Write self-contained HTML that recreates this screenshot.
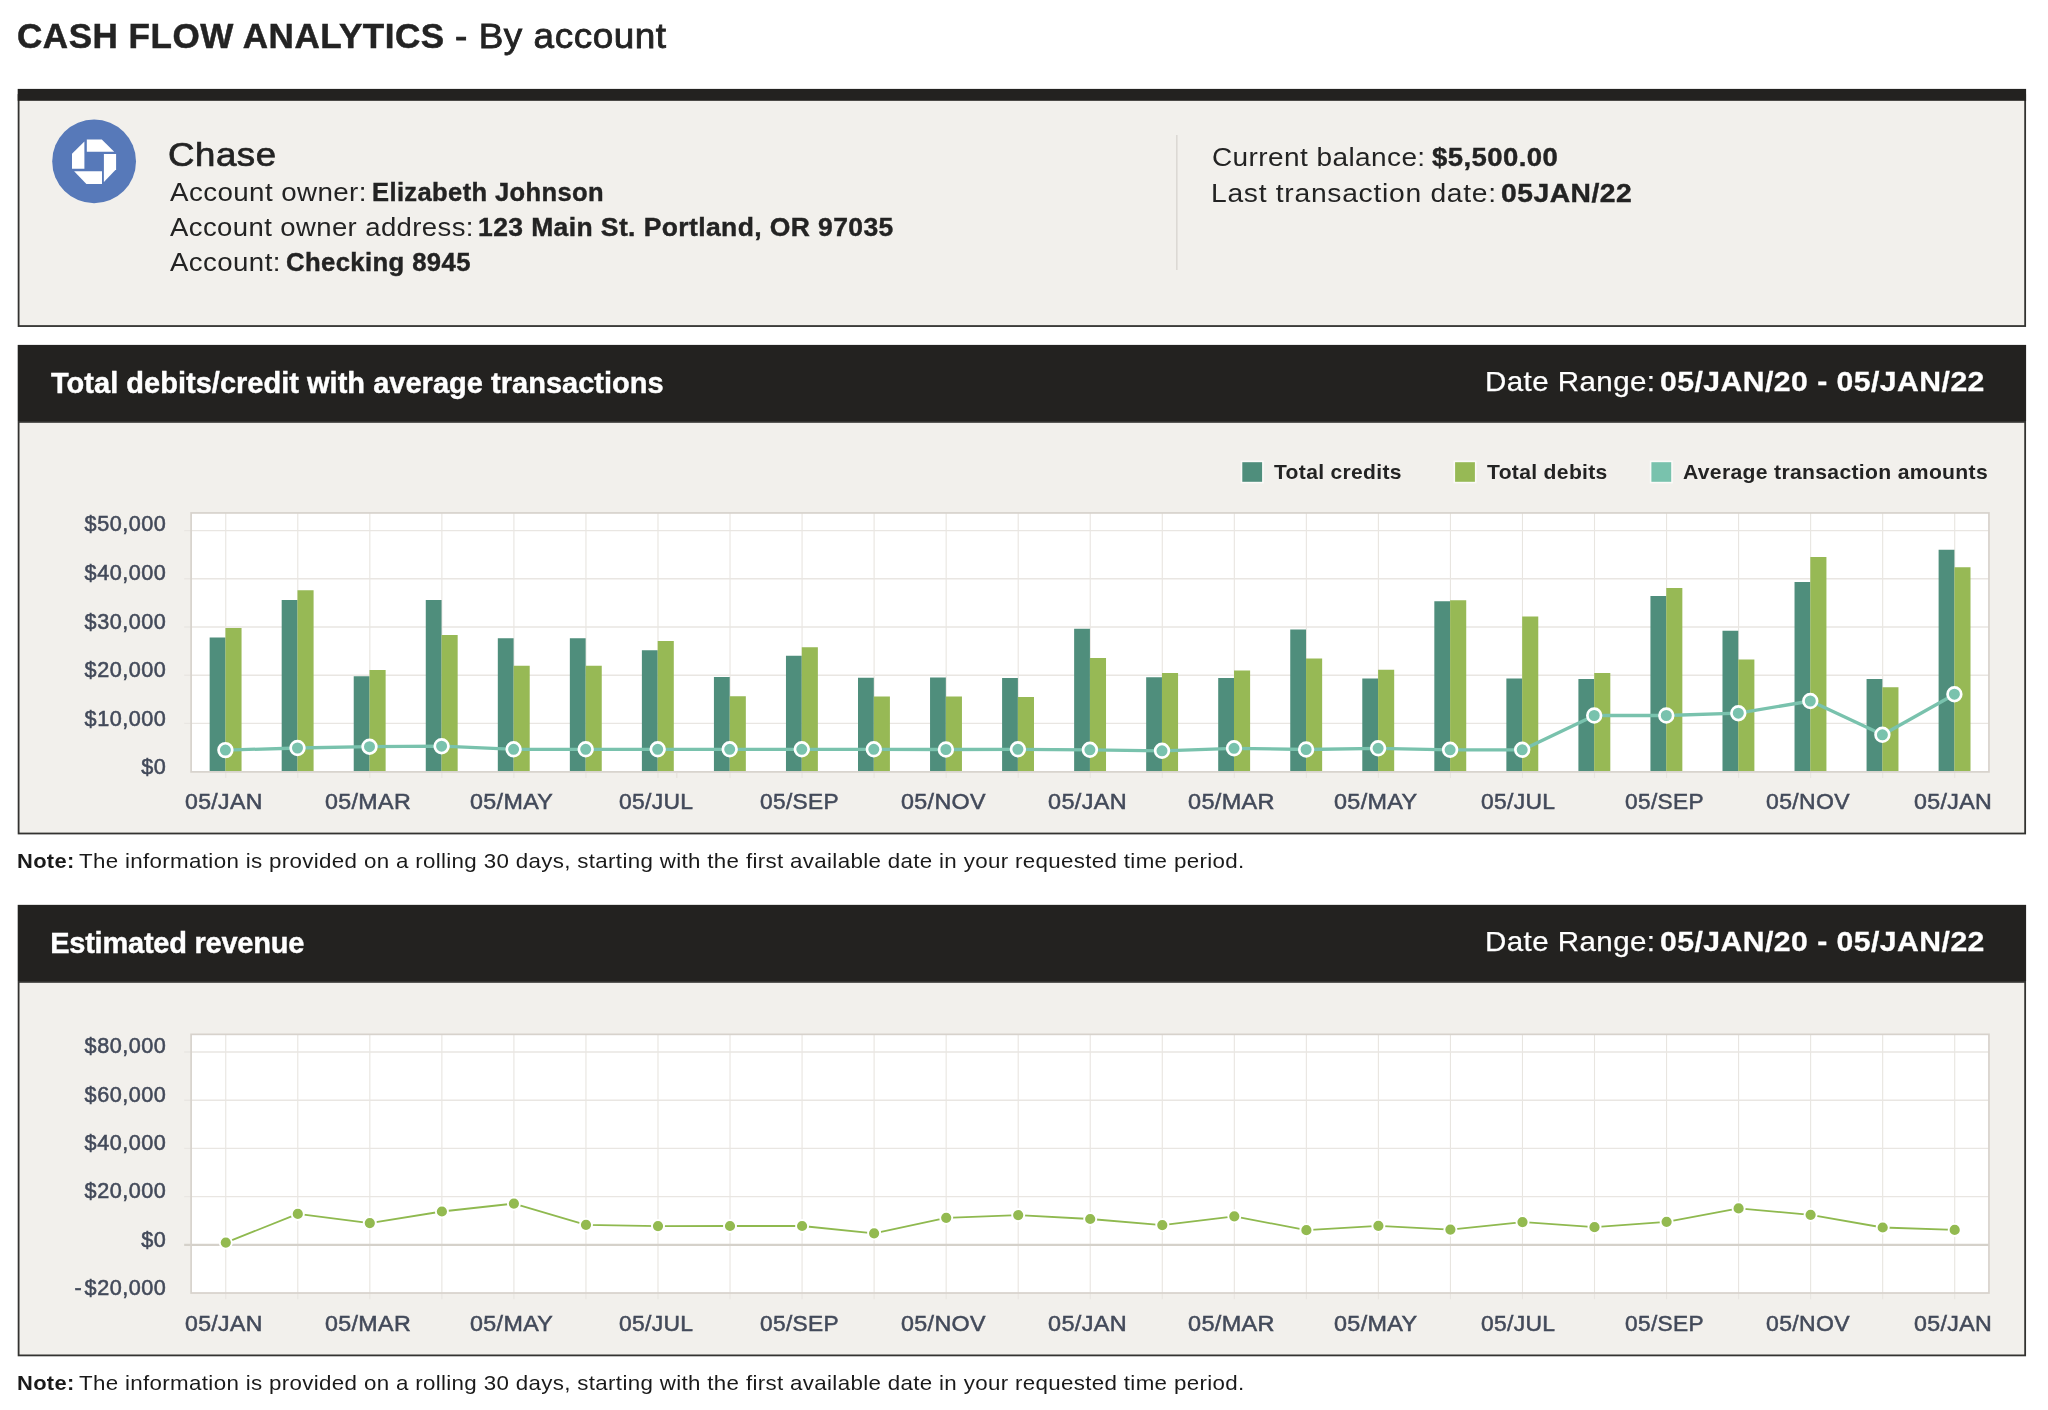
<!DOCTYPE html>
<html lang="en"><head><meta charset="utf-8"><title>Cash Flow Analytics - By account</title>
<style>
html,body{margin:0;padding:0;background:#fff;}
body{width:2048px;height:1410px;position:relative;overflow:hidden;font-family:"Liberation Sans", sans-serif;color:#232323;}
.t{position:absolute;z-index:2;white-space:pre;line-height:1;font-family:"Liberation Sans", sans-serif;}
svg{position:absolute;left:0;top:0;overflow:visible;}
svg text{font-family:"Liberation Sans", sans-serif;}
#wrap{position:absolute;left:0;top:0;width:2048px;height:1410px;will-change:transform;}
</style></head><body><div id="wrap">

<h1 style="margin:0;font-size:0">
<span class="t" id="title_b" style="font-size:34.5px;font-weight:700;color:#232323;top:18.60px;left:16.71px;letter-spacing:0.517px;transform:scaleX(1.0154);transform-origin:0 50%;-webkit-text-stroke:0.5px #232323;">CASH FLOW ANALYTICS</span>
<span class="t" id="title_r" style="font-size:34.5px;font-weight:400;color:#232323;top:18.60px;left:455.15px;letter-spacing:0.517px;transform:scaleX(1.0693);transform-origin:0 50%;-webkit-text-stroke:0.8px #232323;">- By account</span>
</h1>
<section>
<svg width="2048" height="340" viewBox="0 0 2048 340">
<rect x="18.6" y="95" width="2006.55" height="231.05" fill="#f2f0ec" stroke="#333331" stroke-width="1.8"/>
<rect x="17.7" y="88.9" width="2008.4" height="11.9" fill="#232220"/>
<circle cx="94.1" cy="161.4" r="41.9" fill="#5779b9"/>
<g transform="translate(72,139.5)" fill="#fff">
<polygon points="14.8,0 29.8,0 42.2,12.2 14.8,12.2"/>
<polygon points="0,14.2 12.4,2 12.4,29.3 0,29.3"/>
<polygon points="31.9,14.6 44.1,14.6 44.1,29.8 31.9,42.5"/>
<polygon points="2.1,31.7 30,31.7 30,44.4 14.4,44.4"/>
</g>
<rect x="1176" y="135" width="1.6" height="135" fill="#dcd9d4"/>
</svg>
<span class="t" id="chase" style="font-size:33.5px;font-weight:400;color:#232323;top:137.94px;left:167.78px;letter-spacing:0.503px;transform:scaleX(1.0936);transform-origin:0 50%;-webkit-text-stroke:0.7px #232323;">Chase</span>
<span class="t" id="l1a" style="font-size:25px;font-weight:400;color:#232323;top:180.44px;left:170.00px;letter-spacing:0.375px;transform:scaleX(1.1084);transform-origin:0 50%;">Account owner:</span>
<span class="t" id="l1b" style="font-size:25px;font-weight:700;color:#232323;top:180.44px;left:371.60px;letter-spacing:0.375px;transform:scaleX(1.0211);transform-origin:0 50%;-webkit-text-stroke:0.4px #232323;">Elizabeth Johnson</span>
<span class="t" id="l2a" style="font-size:25px;font-weight:400;color:#232323;top:215.24px;left:170.00px;letter-spacing:0.375px;transform:scaleX(1.0993);transform-origin:0 50%;">Account owner address:</span>
<span class="t" id="l2b" style="font-size:25px;font-weight:700;color:#232323;top:215.24px;left:478.34px;letter-spacing:0.375px;transform:scaleX(1.0596);transform-origin:0 50%;-webkit-text-stroke:0.4px #232323;">123 Main St. Portland, OR 97035</span>
<span class="t" id="l3a" style="font-size:25px;font-weight:400;color:#232323;top:250.24px;left:170.00px;letter-spacing:0.375px;transform:scaleX(1.1050);transform-origin:0 50%;">Account:</span>
<span class="t" id="l3b" style="font-size:25px;font-weight:700;color:#232323;top:250.24px;left:285.90px;letter-spacing:0.375px;transform:scaleX(1.0270);transform-origin:0 50%;-webkit-text-stroke:0.4px #232323;">Checking 8945</span>
<span class="t" id="r1a" style="font-size:25px;font-weight:400;color:#232323;top:145.44px;left:1211.69px;letter-spacing:0.375px;transform:scaleX(1.1191);transform-origin:0 50%;">Current balance:</span>
<span class="t" id="r1b" style="font-size:25px;font-weight:700;color:#232323;top:145.44px;left:1432.00px;letter-spacing:0.375px;transform:scaleX(1.1007);transform-origin:0 50%;-webkit-text-stroke:0.4px #232323;">$5,500.00</span>
<span class="t" id="r2a" style="font-size:25px;font-weight:400;color:#232323;top:180.64px;left:1211.19px;letter-spacing:0.630px;transform:scaleX(1.1300);transform-origin:0 50%;">Last transaction date:</span>
<span class="t" id="r2b" style="font-size:25px;font-weight:700;color:#232323;top:180.64px;left:1501.42px;letter-spacing:0.440px;transform:scaleX(1.1300);transform-origin:0 50%;-webkit-text-stroke:0.4px #232323;">05JAN/22</span>
</section>
<section>
<span class="t" id="c1_h" style="font-size:29px;font-weight:700;color:#fff;top:368.65px;left:51.00px;letter-spacing:0.019px;-webkit-text-stroke:0.4px #fff;">Total debits/credit with average transactions</span>
<span class="t" id="c1_dr" style="font-size:28px;font-weight:400;color:#fff;top:368.10px;left:1484.70px;letter-spacing:0.420px;transform:scaleX(1.0536);transform-origin:0 50%;-webkit-text-stroke:0.25px #fff;">Date Range:</span>
<span class="t" id="c1_dv" style="font-size:28px;font-weight:700;color:#fff;top:368.10px;left:1659.66px;letter-spacing:0.420px;transform:scaleX(1.0777);transform-origin:0 50%;-webkit-text-stroke:0.3px #fff;">05/JAN/20 - 05/JAN/22</span>
<svg width="2048" height="1410" viewBox="0 0 2048 1410">
<rect x="18.6" y="421.90" width="2006.55" height="411.60" fill="#f2f0ec" stroke="#333331" stroke-width="1.8"/>
<rect x="17.7" y="344.9" width="2008.4" height="76.10" fill="#232220"/>
<rect x="191.1" y="512.95" width="1797.8500000000001" height="258.94999999999993" fill="#fff"/>
<path d="M225.75 512.95V778.1M297.79 512.95V778.1M369.83 512.95V778.1M441.87 512.95V778.1M513.91 512.95V778.1M585.95 512.95V778.1M657.99 512.95V778.1M730.03 512.95V778.1M802.07 512.95V778.1M874.11 512.95V778.1M946.15 512.95V778.1M1018.19 512.95V778.1M1090.23 512.95V778.1M1162.27 512.95V778.1M1234.31 512.95V778.1M1306.35 512.95V778.1M1378.39 512.95V778.1M1450.43 512.95V778.1M1522.47 512.95V778.1M1594.51 512.95V778.1M1666.55 512.95V778.1M1738.59 512.95V778.1M1810.63 512.95V778.1M1882.67 512.95V778.1M1954.71 512.95V778.1" stroke="#e8e5e0" stroke-width="1.1" fill="none"/>
<path d="M184.2 530.60H1988.95M184.2 578.80H1988.95M184.2 627.00H1988.95M184.2 675.20H1988.95M184.2 723.40H1988.95" stroke="#e9e6e2" stroke-width="1.4" fill="none"/>
<rect x="191.1" y="512.95" width="1797.8500000000001" height="258.94999999999993" fill="none" stroke="#d7d2cc" stroke-width="1.7"/>
<path d="M676.8 772.6999999999999V778.1" stroke="#e4e0db" stroke-width="1.1" fill="none"/>
<path d="M209.65 771.1V637.6H225.45V771.1ZM281.69 771.1V600.0H297.49V771.1ZM353.73 771.1V676.2H369.53V771.1ZM425.77 771.1V600.0H441.57V771.1ZM497.81 771.1V638.3H513.61V771.1ZM569.85 771.1V638.3H585.65V771.1ZM641.89 771.1V650.3H657.69V771.1ZM713.93 771.1V676.9H729.73V771.1ZM785.97 771.1V655.8H801.77V771.1ZM858.01 771.1V677.7H873.81V771.1ZM930.05 771.1V677.4H945.85V771.1ZM1002.09 771.1V677.9H1017.89V771.1ZM1074.13 771.1V628.7H1089.93V771.1ZM1146.17 771.1V677.2H1161.97V771.1ZM1218.21 771.1V677.9H1234.01V771.1ZM1290.25 771.1V629.4H1306.05V771.1ZM1362.29 771.1V678.4H1378.09V771.1ZM1434.33 771.1V601.2H1450.13V771.1ZM1506.37 771.1V678.4H1522.17V771.1ZM1578.41 771.1V679.0H1594.21V771.1ZM1650.45 771.1V595.9H1666.25V771.1ZM1722.49 771.1V630.7H1738.29V771.1ZM1794.53 771.1V581.9H1810.33V771.1ZM1866.57 771.1V678.9H1882.37V771.1ZM1938.61 771.1V549.7H1954.41V771.1Z" fill="#4f8e7c"/>
<path d="M225.45 771.1V627.9H241.55V771.1ZM297.49 771.1V590.3H313.59V771.1ZM369.53 771.1V670.1H385.63V771.1ZM441.57 771.1V635.0H457.67V771.1ZM513.61 771.1V665.7H529.71V771.1ZM585.65 771.1V665.7H601.75V771.1ZM657.69 771.1V641.1H673.79V771.1ZM729.73 771.1V696.2H745.83V771.1ZM801.77 771.1V647.2H817.87V771.1ZM873.81 771.1V696.5H889.91V771.1ZM945.85 771.1V696.5H961.95V771.1ZM1017.89 771.1V697.0H1033.99V771.1ZM1089.93 771.1V657.9H1106.03V771.1ZM1161.97 771.1V672.9H1178.07V771.1ZM1234.01 771.1V670.6H1250.11V771.1ZM1306.05 771.1V658.4H1322.15V771.1ZM1378.09 771.1V669.8H1394.19V771.1ZM1450.13 771.1V600.2H1466.23V771.1ZM1522.17 771.1V616.5H1538.27V771.1ZM1594.21 771.1V673.1H1610.31V771.1ZM1666.25 771.1V588.0H1682.35V771.1ZM1738.29 771.1V659.4H1754.39V771.1ZM1810.33 771.1V557.1H1826.43V771.1ZM1882.37 771.1V687.3H1898.47V771.1ZM1954.41 771.1V567.2H1970.51V771.1Z" fill="#97b955"/>
<polyline points="225.8,750.1 297.8,748.0 369.8,746.7 441.9,746.2 513.9,749.3 586.0,749.3 658.0,749.3 730.0,749.3 802.1,749.3 874.1,749.3 946.2,749.5 1018.2,749.3 1090.2,749.8 1162.3,750.8 1234.3,748.3 1306.4,749.5 1378.4,748.3 1450.4,749.8 1522.5,749.8 1594.5,715.5 1666.6,715.5 1738.6,713.2 1810.6,701.0 1882.7,734.8 1954.7,694.2" fill="none" stroke="#79c2ad" stroke-width="3.3" stroke-linejoin="round"/>
<circle cx="225.4" cy="750.1" r="6.85" fill="#79c2ad" stroke="#fff" stroke-width="2.7"/>
<circle cx="297.5" cy="748.0" r="6.85" fill="#79c2ad" stroke="#fff" stroke-width="2.7"/>
<circle cx="369.5" cy="746.7" r="6.85" fill="#79c2ad" stroke="#fff" stroke-width="2.7"/>
<circle cx="441.6" cy="746.2" r="6.85" fill="#79c2ad" stroke="#fff" stroke-width="2.7"/>
<circle cx="513.6" cy="749.3" r="6.85" fill="#79c2ad" stroke="#fff" stroke-width="2.7"/>
<circle cx="585.7" cy="749.3" r="6.85" fill="#79c2ad" stroke="#fff" stroke-width="2.7"/>
<circle cx="657.7" cy="749.3" r="6.85" fill="#79c2ad" stroke="#fff" stroke-width="2.7"/>
<circle cx="729.7" cy="749.3" r="6.85" fill="#79c2ad" stroke="#fff" stroke-width="2.7"/>
<circle cx="801.8" cy="749.3" r="6.85" fill="#79c2ad" stroke="#fff" stroke-width="2.7"/>
<circle cx="873.8" cy="749.3" r="6.85" fill="#79c2ad" stroke="#fff" stroke-width="2.7"/>
<circle cx="945.9" cy="749.5" r="6.85" fill="#79c2ad" stroke="#fff" stroke-width="2.7"/>
<circle cx="1017.9" cy="749.3" r="6.85" fill="#79c2ad" stroke="#fff" stroke-width="2.7"/>
<circle cx="1089.9" cy="749.8" r="6.85" fill="#79c2ad" stroke="#fff" stroke-width="2.7"/>
<circle cx="1162.0" cy="750.8" r="6.85" fill="#79c2ad" stroke="#fff" stroke-width="2.7"/>
<circle cx="1234.0" cy="748.3" r="6.85" fill="#79c2ad" stroke="#fff" stroke-width="2.7"/>
<circle cx="1306.1" cy="749.5" r="6.85" fill="#79c2ad" stroke="#fff" stroke-width="2.7"/>
<circle cx="1378.1" cy="748.3" r="6.85" fill="#79c2ad" stroke="#fff" stroke-width="2.7"/>
<circle cx="1450.1" cy="749.8" r="6.85" fill="#79c2ad" stroke="#fff" stroke-width="2.7"/>
<circle cx="1522.2" cy="749.8" r="6.85" fill="#79c2ad" stroke="#fff" stroke-width="2.7"/>
<circle cx="1594.2" cy="715.5" r="6.85" fill="#79c2ad" stroke="#fff" stroke-width="2.7"/>
<circle cx="1666.3" cy="715.5" r="6.85" fill="#79c2ad" stroke="#fff" stroke-width="2.7"/>
<circle cx="1738.3" cy="713.2" r="6.85" fill="#79c2ad" stroke="#fff" stroke-width="2.7"/>
<circle cx="1810.3" cy="701.0" r="6.85" fill="#79c2ad" stroke="#fff" stroke-width="2.7"/>
<circle cx="1882.4" cy="734.8" r="6.85" fill="#79c2ad" stroke="#fff" stroke-width="2.7"/>
<circle cx="1954.4" cy="694.2" r="6.85" fill="#79c2ad" stroke="#fff" stroke-width="2.7"/>
</svg>
<span class="t" id="c1_y0" style="font-size:21.6px;font-weight:400;color:#434a5a;top:513.32px;right:1881.75px;letter-spacing:0.510px;-webkit-text-stroke:0.55px #434a5a;">$50,000</span>
<span class="t" id="c1_y1" style="font-size:21.6px;font-weight:400;color:#434a5a;top:561.92px;right:1881.75px;letter-spacing:0.510px;-webkit-text-stroke:0.55px #434a5a;">$40,000</span>
<span class="t" id="c1_y2" style="font-size:21.6px;font-weight:400;color:#434a5a;top:610.52px;right:1881.75px;letter-spacing:0.510px;-webkit-text-stroke:0.55px #434a5a;">$30,000</span>
<span class="t" id="c1_y3" style="font-size:21.6px;font-weight:400;color:#434a5a;top:659.12px;right:1881.75px;letter-spacing:0.510px;-webkit-text-stroke:0.55px #434a5a;">$20,000</span>
<span class="t" id="c1_y4" style="font-size:21.6px;font-weight:400;color:#434a5a;top:707.72px;right:1881.75px;letter-spacing:0.510px;-webkit-text-stroke:0.55px #434a5a;">$10,000</span>
<span class="t" id="c1_y5" style="font-size:21.6px;font-weight:400;color:#434a5a;top:756.32px;right:1881.75px;letter-spacing:0.510px;-webkit-text-stroke:0.55px #434a5a;">$0</span>
<span class="t" id="c1_x0" style="font-size:21.8px;font-weight:400;color:#434a5a;top:791.05px;left:184.88px;letter-spacing:0.327px;transform:scaleX(1.0585);transform-origin:0 50%;-webkit-text-stroke:0.5px #434a5a;">05/JAN</span>
<span class="t" id="c1_x1" style="font-size:21.8px;font-weight:400;color:#434a5a;top:791.05px;left:324.67px;letter-spacing:0.327px;transform:scaleX(1.0665);transform-origin:0 50%;-webkit-text-stroke:0.5px #434a5a;">05/MAR</span>
<span class="t" id="c1_x2" style="font-size:21.8px;font-weight:400;color:#434a5a;top:791.05px;left:469.87px;letter-spacing:0.327px;transform:scaleX(1.0685);transform-origin:0 50%;-webkit-text-stroke:0.5px #434a5a;">05/MAY</span>
<span class="t" id="c1_x3" style="font-size:21.8px;font-weight:400;color:#434a5a;top:791.05px;left:618.59px;letter-spacing:0.327px;transform:scaleX(1.0477);transform-origin:0 50%;-webkit-text-stroke:0.5px #434a5a;">05/JUL</span>
<span class="t" id="c1_x4" style="font-size:21.8px;font-weight:400;color:#434a5a;top:791.05px;left:760.29px;letter-spacing:0.327px;transform:scaleX(1.0410);transform-origin:0 50%;-webkit-text-stroke:0.5px #434a5a;">05/SEP</span>
<span class="t" id="c1_x5" style="font-size:21.8px;font-weight:400;color:#434a5a;top:791.05px;left:901.27px;letter-spacing:0.327px;transform:scaleX(1.0686);transform-origin:0 50%;-webkit-text-stroke:0.5px #434a5a;">05/NOV</span>
<span class="t" id="c1_x6" style="font-size:21.8px;font-weight:400;color:#434a5a;top:791.05px;left:1048.27px;letter-spacing:0.327px;transform:scaleX(1.0755);transform-origin:0 50%;-webkit-text-stroke:0.5px #434a5a;">05/JAN</span>
<span class="t" id="c1_x7" style="font-size:21.8px;font-weight:400;color:#434a5a;top:791.05px;left:1188.27px;letter-spacing:0.327px;transform:scaleX(1.0767);transform-origin:0 50%;-webkit-text-stroke:0.5px #434a5a;">05/MAR</span>
<span class="t" id="c1_x8" style="font-size:21.8px;font-weight:400;color:#434a5a;top:791.05px;left:1333.97px;letter-spacing:0.327px;transform:scaleX(1.0724);transform-origin:0 50%;-webkit-text-stroke:0.5px #434a5a;">05/MAY</span>
<span class="t" id="c1_x9" style="font-size:21.8px;font-weight:400;color:#434a5a;top:791.05px;left:1480.59px;letter-spacing:0.327px;transform:scaleX(1.0477);transform-origin:0 50%;-webkit-text-stroke:0.5px #434a5a;">05/JUL</span>
<span class="t" id="c1_x10" style="font-size:21.8px;font-weight:400;color:#434a5a;top:791.05px;left:1624.79px;letter-spacing:0.327px;transform:scaleX(1.0397);transform-origin:0 50%;-webkit-text-stroke:0.5px #434a5a;">05/SEP</span>
<span class="t" id="c1_x11" style="font-size:21.8px;font-weight:400;color:#434a5a;top:791.05px;left:1765.98px;letter-spacing:0.327px;transform:scaleX(1.0559);transform-origin:0 50%;-webkit-text-stroke:0.5px #434a5a;">05/NOV</span>
<span class="t" id="c1_x12" style="font-size:21.8px;font-weight:400;color:#434a5a;top:791.05px;left:1913.88px;letter-spacing:0.327px;transform:scaleX(1.0642);transform-origin:0 50%;-webkit-text-stroke:0.5px #434a5a;">05/JAN</span>
</section>
<p style="margin:0;font-size:0">
<span class="t" id="c1_nb" style="font-size:21px;font-weight:700;color:#1a1a1a;top:850.12px;left:17.03px;letter-spacing:0.315px;transform:scaleX(1.0431);transform-origin:0 50%;">Note:</span>
<span class="t" id="c1_nr" style="font-size:21px;font-weight:400;color:#1a1a1a;top:850.12px;left:78.85px;letter-spacing:0.315px;transform:scaleX(1.0632);transform-origin:0 50%;">The information is provided on a rolling 30 days, starting with the first available date in your requested time period.</span>
</p>
<div>
<svg width="2048" height="500" viewBox="0 0 2048 500"><rect x="1241.5" y="461.4" width="21.4" height="21.2" fill="#4f8e7c" stroke="#fbfaf8" stroke-width="1.6"/></svg>
<span class="t" id="lg0" style="font-size:20.5px;font-weight:700;color:#232323;top:462.15px;left:1273.90px;letter-spacing:0.307px;transform:scaleX(1.0274);transform-origin:0 50%;">Total credits</span>
<svg width="2048" height="500" viewBox="0 0 2048 500"><rect x="1454.3" y="461.4" width="21.4" height="21.2" fill="#97b955" stroke="#fbfaf8" stroke-width="1.6"/></svg>
<span class="t" id="lg1" style="font-size:20.5px;font-weight:700;color:#232323;top:462.15px;left:1487.20px;letter-spacing:0.308px;transform:scaleX(1.0296);transform-origin:0 50%;">Total debits</span>
<svg width="2048" height="500" viewBox="0 0 2048 500"><rect x="1650.6" y="461.4" width="21.4" height="21.2" fill="#79c2ad" stroke="#fbfaf8" stroke-width="1.6"/></svg>
<span class="t" id="lg2" style="font-size:20.5px;font-weight:700;color:#232323;top:462.15px;left:1682.67px;letter-spacing:0.308px;transform:scaleX(1.0312);transform-origin:0 50%;">Average transaction amounts</span>
</div>
<section>
<span class="t" id="c2_h" style="font-size:29px;font-weight:700;color:#fff;top:929.35px;left:50.19px;letter-spacing:-0.234px;-webkit-text-stroke:0.4px #fff;">Estimated revenue</span>
<span class="t" id="c2_dr" style="font-size:28px;font-weight:400;color:#fff;top:928.10px;left:1484.70px;letter-spacing:0.420px;transform:scaleX(1.0536);transform-origin:0 50%;-webkit-text-stroke:0.25px #fff;">Date Range:</span>
<span class="t" id="c2_dv" style="font-size:28px;font-weight:700;color:#fff;top:928.10px;left:1659.66px;letter-spacing:0.420px;transform:scaleX(1.0777);transform-origin:0 50%;-webkit-text-stroke:0.3px #fff;">05/JAN/20 - 05/JAN/22</span>
<svg width="2048" height="1410" viewBox="0 0 2048 1410">
<rect x="18.6" y="981.90" width="2006.55" height="373.50" fill="#f2f0ec" stroke="#333331" stroke-width="1.8"/>
<rect x="17.7" y="904.85" width="2008.4" height="76.15" fill="#232220"/>
<rect x="191.1" y="1034.35" width="1797.8500000000001" height="258.6500000000001" fill="#fff"/>
<path d="M225.75 1034.35V1299.2M297.79 1034.35V1299.2M369.83 1034.35V1299.2M441.87 1034.35V1299.2M513.91 1034.35V1299.2M585.95 1034.35V1299.2M657.99 1034.35V1299.2M730.03 1034.35V1299.2M802.07 1034.35V1299.2M874.11 1034.35V1299.2M946.15 1034.35V1299.2M1018.19 1034.35V1299.2M1090.23 1034.35V1299.2M1162.27 1034.35V1299.2M1234.31 1034.35V1299.2M1306.35 1034.35V1299.2M1378.39 1034.35V1299.2M1450.43 1034.35V1299.2M1522.47 1034.35V1299.2M1594.51 1034.35V1299.2M1666.55 1034.35V1299.2M1738.59 1034.35V1299.2M1810.63 1034.35V1299.2M1882.67 1034.35V1299.2M1954.71 1034.35V1299.2" stroke="#e8e5e0" stroke-width="1.1" fill="none"/>
<path d="M184.2 1052.00H1988.95M184.2 1100.20H1988.95M184.2 1148.40H1988.95M184.2 1196.60H1988.95M184.2 1244.80H1988.95" stroke="#e9e6e2" stroke-width="1.4" fill="none"/>
<path d="M184.2 1244.80H1988.95" stroke="#d5d1ca" stroke-width="2.2" fill="none"/>
<rect x="191.1" y="1034.35" width="1797.8500000000001" height="258.6500000000001" fill="none" stroke="#d7d2cc" stroke-width="1.7"/>
<polyline points="225.8,1242.6 297.8,1213.9 369.8,1223.1 441.9,1211.5 513.9,1203.6 586.0,1224.8 658.0,1226.1 730.0,1226.0 802.1,1226.0 874.1,1233.3 946.2,1217.8 1018.2,1215.1 1090.2,1219.0 1162.3,1225.1 1234.3,1216.3 1306.4,1230.2 1378.4,1225.8 1450.4,1229.6 1522.5,1222.1 1594.5,1227.2 1666.6,1221.8 1738.6,1208.4 1810.6,1214.8 1882.7,1227.5 1954.7,1229.9" fill="none" stroke="#8fb94f" stroke-width="1.8" stroke-linejoin="round"/>
<circle cx="225.8" cy="1242.6" r="6.05" fill="#93ba50" stroke="#fff" stroke-width="1.9"/>
<circle cx="297.8" cy="1213.9" r="6.05" fill="#93ba50" stroke="#fff" stroke-width="1.9"/>
<circle cx="369.8" cy="1223.1" r="6.05" fill="#93ba50" stroke="#fff" stroke-width="1.9"/>
<circle cx="441.9" cy="1211.5" r="6.05" fill="#93ba50" stroke="#fff" stroke-width="1.9"/>
<circle cx="513.9" cy="1203.6" r="6.05" fill="#93ba50" stroke="#fff" stroke-width="1.9"/>
<circle cx="586.0" cy="1224.8" r="6.05" fill="#93ba50" stroke="#fff" stroke-width="1.9"/>
<circle cx="658.0" cy="1226.1" r="6.05" fill="#93ba50" stroke="#fff" stroke-width="1.9"/>
<circle cx="730.0" cy="1226.0" r="6.05" fill="#93ba50" stroke="#fff" stroke-width="1.9"/>
<circle cx="802.1" cy="1226.0" r="6.05" fill="#93ba50" stroke="#fff" stroke-width="1.9"/>
<circle cx="874.1" cy="1233.3" r="6.05" fill="#93ba50" stroke="#fff" stroke-width="1.9"/>
<circle cx="946.2" cy="1217.8" r="6.05" fill="#93ba50" stroke="#fff" stroke-width="1.9"/>
<circle cx="1018.2" cy="1215.1" r="6.05" fill="#93ba50" stroke="#fff" stroke-width="1.9"/>
<circle cx="1090.2" cy="1219.0" r="6.05" fill="#93ba50" stroke="#fff" stroke-width="1.9"/>
<circle cx="1162.3" cy="1225.1" r="6.05" fill="#93ba50" stroke="#fff" stroke-width="1.9"/>
<circle cx="1234.3" cy="1216.3" r="6.05" fill="#93ba50" stroke="#fff" stroke-width="1.9"/>
<circle cx="1306.4" cy="1230.2" r="6.05" fill="#93ba50" stroke="#fff" stroke-width="1.9"/>
<circle cx="1378.4" cy="1225.8" r="6.05" fill="#93ba50" stroke="#fff" stroke-width="1.9"/>
<circle cx="1450.4" cy="1229.6" r="6.05" fill="#93ba50" stroke="#fff" stroke-width="1.9"/>
<circle cx="1522.5" cy="1222.1" r="6.05" fill="#93ba50" stroke="#fff" stroke-width="1.9"/>
<circle cx="1594.5" cy="1227.2" r="6.05" fill="#93ba50" stroke="#fff" stroke-width="1.9"/>
<circle cx="1666.6" cy="1221.8" r="6.05" fill="#93ba50" stroke="#fff" stroke-width="1.9"/>
<circle cx="1738.6" cy="1208.4" r="6.05" fill="#93ba50" stroke="#fff" stroke-width="1.9"/>
<circle cx="1810.6" cy="1214.8" r="6.05" fill="#93ba50" stroke="#fff" stroke-width="1.9"/>
<circle cx="1882.7" cy="1227.5" r="6.05" fill="#93ba50" stroke="#fff" stroke-width="1.9"/>
<circle cx="1954.7" cy="1229.9" r="6.05" fill="#93ba50" stroke="#fff" stroke-width="1.9"/>
</svg>
<span class="t" id="c2_y0" style="font-size:21.6px;font-weight:400;color:#434a5a;top:1035.12px;right:1881.75px;letter-spacing:0.510px;-webkit-text-stroke:0.55px #434a5a;">$80,000</span>
<span class="t" id="c2_y1" style="font-size:21.6px;font-weight:400;color:#434a5a;top:1083.57px;right:1881.75px;letter-spacing:0.510px;-webkit-text-stroke:0.55px #434a5a;">$60,000</span>
<span class="t" id="c2_y2" style="font-size:21.6px;font-weight:400;color:#434a5a;top:1132.02px;right:1881.75px;letter-spacing:0.510px;-webkit-text-stroke:0.55px #434a5a;">$40,000</span>
<span class="t" id="c2_y3" style="font-size:21.6px;font-weight:400;color:#434a5a;top:1180.47px;right:1881.75px;letter-spacing:0.510px;-webkit-text-stroke:0.55px #434a5a;">$20,000</span>
<span class="t" id="c2_y4" style="font-size:21.6px;font-weight:400;color:#434a5a;top:1228.92px;right:1881.75px;letter-spacing:0.510px;-webkit-text-stroke:0.55px #434a5a;">$0</span>
<span class="t" id="c2_y5" style="font-size:21.6px;font-weight:400;color:#434a5a;top:1277.37px;right:1881.75px;letter-spacing:0.510px;-webkit-text-stroke:0.55px #434a5a;"><span style="margin-right:2.4px">-</span>$20,000</span>
<span class="t" id="c2_x0" style="font-size:21.8px;font-weight:400;color:#434a5a;top:1313.05px;left:184.88px;letter-spacing:0.327px;transform:scaleX(1.0585);transform-origin:0 50%;-webkit-text-stroke:0.5px #434a5a;">05/JAN</span>
<span class="t" id="c2_x1" style="font-size:21.8px;font-weight:400;color:#434a5a;top:1313.05px;left:324.67px;letter-spacing:0.327px;transform:scaleX(1.0665);transform-origin:0 50%;-webkit-text-stroke:0.5px #434a5a;">05/MAR</span>
<span class="t" id="c2_x2" style="font-size:21.8px;font-weight:400;color:#434a5a;top:1313.05px;left:469.87px;letter-spacing:0.327px;transform:scaleX(1.0685);transform-origin:0 50%;-webkit-text-stroke:0.5px #434a5a;">05/MAY</span>
<span class="t" id="c2_x3" style="font-size:21.8px;font-weight:400;color:#434a5a;top:1313.05px;left:618.59px;letter-spacing:0.327px;transform:scaleX(1.0477);transform-origin:0 50%;-webkit-text-stroke:0.5px #434a5a;">05/JUL</span>
<span class="t" id="c2_x4" style="font-size:21.8px;font-weight:400;color:#434a5a;top:1313.05px;left:760.29px;letter-spacing:0.327px;transform:scaleX(1.0410);transform-origin:0 50%;-webkit-text-stroke:0.5px #434a5a;">05/SEP</span>
<span class="t" id="c2_x5" style="font-size:21.8px;font-weight:400;color:#434a5a;top:1313.05px;left:901.27px;letter-spacing:0.327px;transform:scaleX(1.0686);transform-origin:0 50%;-webkit-text-stroke:0.5px #434a5a;">05/NOV</span>
<span class="t" id="c2_x6" style="font-size:21.8px;font-weight:400;color:#434a5a;top:1313.05px;left:1048.27px;letter-spacing:0.327px;transform:scaleX(1.0755);transform-origin:0 50%;-webkit-text-stroke:0.5px #434a5a;">05/JAN</span>
<span class="t" id="c2_x7" style="font-size:21.8px;font-weight:400;color:#434a5a;top:1313.05px;left:1188.27px;letter-spacing:0.327px;transform:scaleX(1.0767);transform-origin:0 50%;-webkit-text-stroke:0.5px #434a5a;">05/MAR</span>
<span class="t" id="c2_x8" style="font-size:21.8px;font-weight:400;color:#434a5a;top:1313.05px;left:1333.97px;letter-spacing:0.327px;transform:scaleX(1.0724);transform-origin:0 50%;-webkit-text-stroke:0.5px #434a5a;">05/MAY</span>
<span class="t" id="c2_x9" style="font-size:21.8px;font-weight:400;color:#434a5a;top:1313.05px;left:1480.59px;letter-spacing:0.327px;transform:scaleX(1.0477);transform-origin:0 50%;-webkit-text-stroke:0.5px #434a5a;">05/JUL</span>
<span class="t" id="c2_x10" style="font-size:21.8px;font-weight:400;color:#434a5a;top:1313.05px;left:1624.79px;letter-spacing:0.327px;transform:scaleX(1.0397);transform-origin:0 50%;-webkit-text-stroke:0.5px #434a5a;">05/SEP</span>
<span class="t" id="c2_x11" style="font-size:21.8px;font-weight:400;color:#434a5a;top:1313.05px;left:1765.98px;letter-spacing:0.327px;transform:scaleX(1.0559);transform-origin:0 50%;-webkit-text-stroke:0.5px #434a5a;">05/NOV</span>
<span class="t" id="c2_x12" style="font-size:21.8px;font-weight:400;color:#434a5a;top:1313.05px;left:1913.88px;letter-spacing:0.327px;transform:scaleX(1.0642);transform-origin:0 50%;-webkit-text-stroke:0.5px #434a5a;">05/JAN</span>
</section>
<p style="margin:0;font-size:0">
<span class="t" id="c2_nb" style="font-size:21px;font-weight:700;color:#1a1a1a;top:1371.72px;left:17.03px;letter-spacing:0.315px;transform:scaleX(1.0431);transform-origin:0 50%;">Note:</span>
<span class="t" id="c2_nr" style="font-size:21px;font-weight:400;color:#1a1a1a;top:1371.72px;left:78.85px;letter-spacing:0.315px;transform:scaleX(1.0632);transform-origin:0 50%;">The information is provided on a rolling 30 days, starting with the first available date in your requested time period.</span>
</p>
</div></body></html>
